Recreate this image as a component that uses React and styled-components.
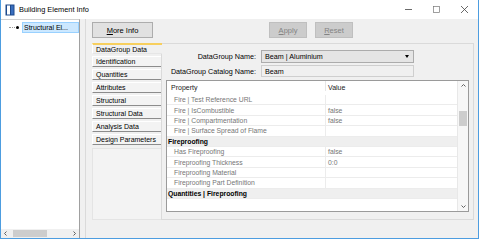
import React from "react";
import styled, { createGlobalStyle } from "styled-components";

const GlobalStyle = createGlobalStyle`
  html, body {
    margin: 0;
    padding: 0;
    background: #fff;
  }
  body {
    font-family: "Liberation Sans", Arial, sans-serif;
    color: #000;
  }
`;

const Window = styled.div`
  width: 479px;
  height: 239px;
  box-sizing: border-box;
  border: 1px solid #4d9de0;
  border-top: 0;
  display: flex;
  flex-direction: column;
  background: #fff;
`;

const TitleBar = styled.div`
  height: 19px;
  display: flex;
  align-items: center;
  background: #fff;
`;

const AppIcon = styled.svg`
  margin-left: 4px;
  width: 10px;
  height: 12px;
`;

const Title = styled.span`
  margin-left: 4px;
  font-size: 7.4px;
  color: #000;
`;

const Controls = styled.div`
  margin-left: auto;
  display: flex;
`;

const ControlBtn = styled.div`
  width: 28px;
  height: 19px;
  display: flex;
  align-items: center;
  justify-content: center;
`;

const Body = styled.div`
  flex: 1;
  display: flex;
  min-height: 0;
`;

const TreePane = styled.div`
  width: 78px;
  border-top: 1px solid #d0d0d0;
  border-right: 1px solid #a0a0a0;
  background: #fff;
  display: flex;
  flex-direction: column;
`;

const TreeRow = styled.div`
  margin-top: 2px;
  height: 11px;
  display: flex;
  align-items: center;
`;

const Connector = styled.span`
  margin-left: 8px;
  width: 6px;
  border-top: 1px dotted #9a9a9a;
`;

const Bullet = styled.span`
  margin-left: 1px;
  width: 3px;
  height: 3px;
  border-radius: 50%;
  background: #000;
`;

const TreeLabel = styled.span`
  margin-left: 3px;
  flex: 1;
  height: 11px;
  box-sizing: border-box;
  background: #cce8ff;
  border: 1px solid #99d1ff;
  font-size: 7px;
  line-height: 9px;
  padding-left: 1px;
  white-space: nowrap;
`;

const HScroll = styled.div`
  margin-top: auto;
  height: 9px;
  background: #f0f0f0;
  display: flex;
  align-items: center;
`;

const ScrollArrow = styled.svg`
  width: 9px;
  height: 9px;
  flex: none;
`;

const HThumb = styled.div`
  margin-left: 3px;
  width: 34px;
  height: 7px;
  background: #cdcdcd;
`;

const Splitter = styled.div`
  width: 5px;
  background: #f0f0f0;
  border-right: 1px solid #dadada;
`;

const MainPane = styled.div`
  flex: 1;
  background: #f0f0f0;
  padding: 3px 4px 0 6px;
  display: flex;
  flex-direction: column;
`;

const Toolbar = styled.div`
  display: flex;
  height: 16px;
`;

const Button = styled.div`
  width: ${(p) => p.$w}px;
  margin-left: ${(p) => p.$ml || 0}px;
  box-sizing: border-box;
  height: 16px;
  display: flex;
  align-items: center;
  justify-content: center;
  font-size: 7.5px;
  background: ${(p) => (p.$disabled ? "#cccccc" : "#e1e1e1")};
  border: 1px solid ${(p) => (p.$disabled ? "#bfbfbf" : "#adadad")};
  color: ${(p) => (p.$disabled ? "#838383" : "#000")};
  u {
    text-decoration: underline;
  }
`;

const TabArea = styled.div`
  margin-top: 5px;
  height: 177px;
  display: flex;
`;

const TabList = styled.div`
  width: 69px;
  display: flex;
  flex-direction: column;
  gap: 2px;
`;

const Tab = styled.div`
  height: 11px;
  box-sizing: border-box;
  padding-left: 3px;
  font-size: 7px;
  line-height: 9px;
  white-space: nowrap;
  background: ${(p) => (p.$active ? "#f0f0f0" : "#f3f3f3")};
  border-top: ${(p) => (p.$active ? "2px solid #f7cf5e" : "1px solid #fff")};
  border-left: 1px solid #fff;
  border-bottom: 1px solid ${(p) => (p.$active ? "#e6e6e6" : "#8c8c8c")};
  margin-right: ${(p) => (p.$active ? "-1px" : "0")};
  position: relative;
`;

const TabFiller = styled.div`
  flex: 1;
  margin-top: 1px;
  border: 1px solid #e4e4e4;
  border-right: 0;
  background: #f3f3f3;
`;

const Panel = styled.div`
  flex: 1;
  box-sizing: border-box;
  border: 1px solid #dadada;
  padding: 6px 4px 7px 4px;
  display: flex;
  flex-direction: column;
`;

const FormRow = styled.div`
  display: flex;
  align-items: center;
  height: ${(p) => p.$h}px;
  margin-bottom: 2px;
`;

const Label = styled.div`
  width: 90px;
  text-align: right;
  font-size: 7.2px;
  margin-right: 5px;
  white-space: nowrap;
`;

const Field = styled.div`
  width: 153px;
  height: 100%;
  box-sizing: border-box;
  display: flex;
  align-items: center;
  padding-left: 3px;
  font-size: 7.2px;
  background: ${(p) => (p.$combo ? "#e5e5e5" : "#f0f0f0")};
  border: 1px solid ${(p) => (p.$combo ? "#acacac" : "#cfcfcf")};
`;

const ComboArrow = styled.span`
  margin-left: auto;
  margin-right: 4px;
  width: 0;
  height: 0;
  border-left: 2.5px solid transparent;
  border-right: 2.5px solid transparent;
  border-top: 3px solid #000;
`;

const Grid = styled.div`
  margin-top: 1px;
  flex: 1;
  border: 1px solid #9a9a9a;
  background: #fff;
  display: flex;
  min-height: 0;
`;

const Table = styled.div`
  flex: 1;
  display: flex;
  flex-direction: column;
`;

const HeaderRow = styled.div`
  height: 14px;
  display: flex;
  font-size: 7px;
  color: #1a1a1a;
`;

const HeadCell = styled.div`
  width: ${(p) => (p.$first ? "159px" : "auto")};
  flex: ${(p) => (p.$first ? "none" : "1")};
  padding: 3px 0 0 ${(p) => (p.$first ? 4 : 2)}px;
  box-sizing: border-box;
  border-right: ${(p) => (p.$first ? "1px solid #e6e6e6" : "0")};
  height: 10px;
`;

const Row = styled.div`
  height: 10.4px;
  box-sizing: border-box;
  display: flex;
  align-items: center;
  font-size: 6.8px;
  border-bottom: 1px solid #ececec;
  background: ${(p) => (p.$category ? "#efefef" : "#fff")};
`;

const NameCell = styled.div`
  width: 159px;
  height: 100%;
  box-sizing: border-box;
  padding-left: 7px;
  color: #767676;
  border-right: 1px solid #ececec;
  display: flex;
  align-items: center;
  white-space: nowrap;
`;

const ValueCell = styled.div`
  flex: 1;
  padding-left: 2px;
  color: #767676;
`;

const CategoryCell = styled.div`
  padding-left: 1px;
  font-weight: bold;
  color: #000;
  white-space: nowrap;
`;

const VScroll = styled.div`
  width: 10px;
  border-left: 1px solid #e8e8e8;
  background: #f7f7f7;
  display: flex;
  flex-direction: column;
  align-items: center;
`;

const VThumb = styled.div`
  margin-top: 21px;
  width: 8px;
  height: 15px;
  background: #cdcdcd;
`;

const tabs = [
  "DataGroup Data",
  "Identification",
  "Quantities",
  "Attributes",
  "Structural",
  "Structural Data",
  "Analysis Data",
  "Design Parameters",
];

const rows = [
  { name: "Fire | Test Reference URL", value: "" },
  { name: "Fire | IsCombustible", value: "false" },
  { name: "Fire | Compartmentation", value: "false" },
  { name: "Fire | Surface Spread of Flame", value: "" },
  { category: "Fireproofing" },
  { name: "Has Fireproofing", value: "false" },
  { name: "Fireproofing Thickness", value: "0:0" },
  { name: "Fireproofing Material", value: "" },
  { name: "Fireproofing Part Definition", value: "" },
  { category: "Quantities | Fireproofing" },
];

const Chevron = ({ dir }) => {
  const paths = {
    left: "M5.5 2.5 L3.5 4.5 L5.5 6.5",
    right: "M3.5 2.5 L5.5 4.5 L3.5 6.5",
    up: "M2.5 5.5 L4.5 3.5 L6.5 5.5",
    down: "M2.5 3.5 L4.5 5.5 L6.5 3.5",
  };
  return (
    <ScrollArrow viewBox="0 0 9 9">
      <path d={paths[dir]} fill="none" stroke="#606060" strokeWidth="1" />
    </ScrollArrow>
  );
};

export default function App() {
  return (
    <>
      <GlobalStyle />
      <Window>
        <TitleBar>
          <AppIcon viewBox="0 0 10 12">
            <rect x="0.5" y="0.5" width="9" height="11" fill="#1f4a8c" />
            <rect x="2" y="1.5" width="3" height="9" fill="#ffffff" />
            <rect x="6" y="1.5" width="2.5" height="9" fill="#3a6fbf" />
          </AppIcon>
          <Title>Building Element Info</Title>
          <Controls>
            <ControlBtn>
              <svg width="9" height="9" viewBox="0 0 9 9">
                <path d="M1 4.5 H8" stroke="#444" strokeWidth="0.8" />
              </svg>
            </ControlBtn>
            <ControlBtn>
              <svg width="9" height="9" viewBox="0 0 9 9">
                <rect x="1.5" y="1.5" width="6" height="6" fill="none" stroke="#777" strokeWidth="0.7" />
              </svg>
            </ControlBtn>
            <ControlBtn>
              <svg width="9" height="9" viewBox="0 0 9 9">
                <path d="M1 1 L8 8 M8 1 L1 8" stroke="#444" strokeWidth="0.8" />
              </svg>
            </ControlBtn>
          </Controls>
        </TitleBar>
        <Body>
          <TreePane>
            <TreeRow>
              <Connector />
              <Bullet />
              <TreeLabel>Structural El...</TreeLabel>
            </TreeRow>
            <HScroll>
              <Chevron dir="left" />
              <HThumb />
              <span style={{ flex: 1 }} />
              <Chevron dir="right" />
            </HScroll>
          </TreePane>
          <Splitter />
          <MainPane>
            <Toolbar>
              <Button $w={61}>
                <span>
                  <u>M</u>ore Info
                </span>
              </Button>
              <Button $w={38} $ml={116} $disabled>
                <span>
                  <u>A</u>pply
                </span>
              </Button>
              <Button $w={38} $ml={8} $disabled>
                <span>
                  <u>R</u>eset
                </span>
              </Button>
            </Toolbar>
            <TabArea>
              <TabList>
                {tabs.map((t, i) => (
                  <Tab key={t} $active={i === 0}>
                    {t}
                  </Tab>
                ))}
                <TabFiller />
              </TabList>
              <Panel>
                <FormRow $h={13}>
                  <Label>DataGroup Name:</Label>
                  <Field $combo>
                    Beam | Aluminium
                    <ComboArrow />
                  </Field>
                </FormRow>
                <FormRow $h={12}>
                  <Label>DataGroup Catalog Name:</Label>
                  <Field>Beam</Field>
                </FormRow>
                <Grid>
                  <Table>
                    <HeaderRow>
                      <HeadCell $first>Property</HeadCell>
                      <HeadCell>Value</HeadCell>
                    </HeaderRow>
                    {rows.map((r, i) =>
                      r.category ? (
                        <Row key={i} $category>
                          <CategoryCell>{r.category}</CategoryCell>
                        </Row>
                      ) : (
                        <Row key={i}>
                          <NameCell>{r.name}</NameCell>
                          <ValueCell>{r.value}</ValueCell>
                        </Row>
                      )
                    )}
                  </Table>
                  <VScroll>
                    <Chevron dir="up" />
                    <VThumb />
                    <span style={{ flex: 1 }} />
                    <Chevron dir="down" />
                  </VScroll>
                </Grid>
              </Panel>
            </TabArea>
          </MainPane>
        </Body>
      </Window>
    </>
  );
}
